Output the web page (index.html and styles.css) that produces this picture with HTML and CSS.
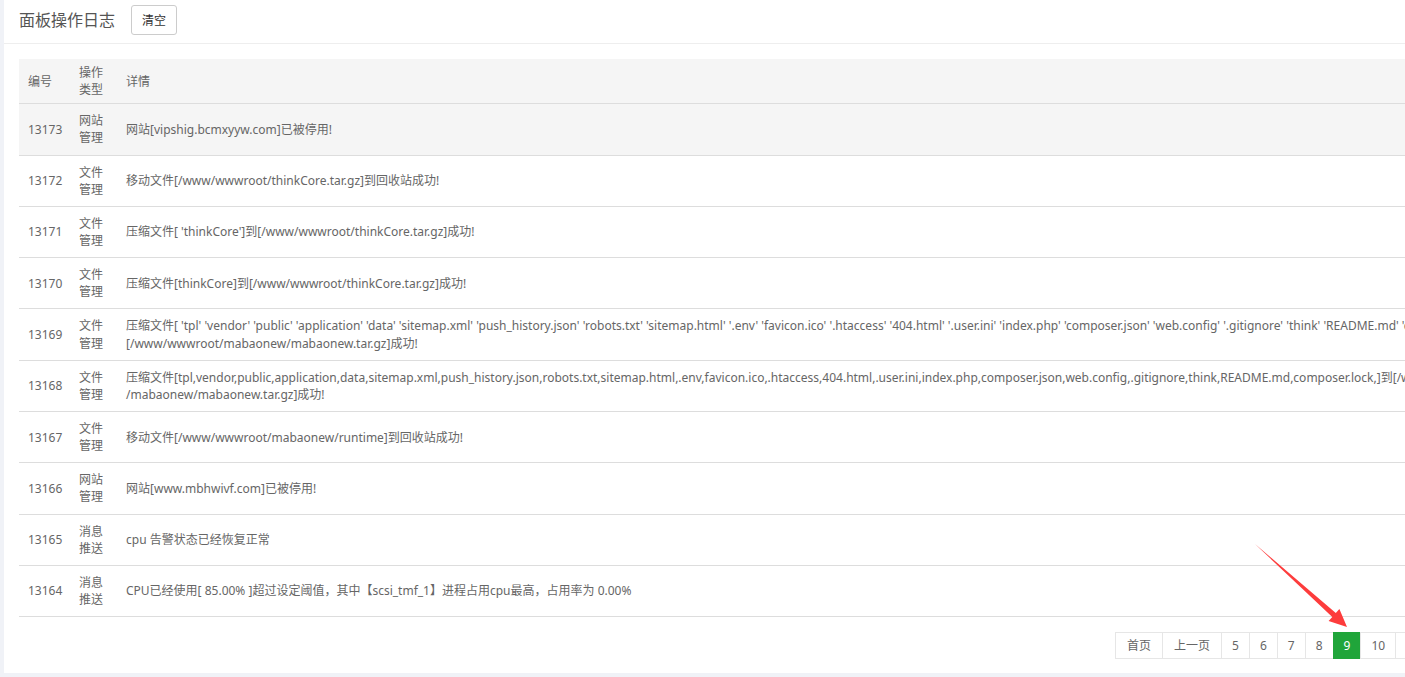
FILE: index.html
```
<!DOCTYPE html>
<html lang="zh-CN">
<head>
  <meta charset="UTF-8">
  <title>面板操作日志</title>
  <link rel="stylesheet" href="styles.css">
</head>
<body>
  <div class="panel">
    <div class="panel-head">
      <span class="panel-title">面板操作日志</span>
      <button class="btn">清空</button>
    </div>

    <div class="panel-body">
      <table class="log-table">
        <thead>
          <tr>
            <th class="col-id">编号</th>
            <th class="col-type">操作类型</th>
            <th>详情</th>
          </tr>
        </thead>
        <tbody>
          <tr class="hover">
            <td>13173</td><td>网站管理</td>
            <td>网站[vipshig.bcmxyyw.com]已被停用!</td>
          </tr>
          <tr>
            <td>13172</td><td>文件管理</td>
            <td>移动文件[/www/wwwroot/thinkCore.tar.gz]到回收站成功!</td>
          </tr>
          <tr>
            <td>13171</td><td>文件管理</td>
            <td>压缩文件[ 'thinkCore']到[/www/wwwroot/thinkCore.tar.gz]成功!</td>
          </tr>
          <tr>
            <td>13170</td><td>文件管理</td>
            <td>压缩文件[thinkCore]到[/www/wwwroot/thinkCore.tar.gz]成功!</td>
          </tr>
          <tr>
            <td>13169</td><td>文件管理</td>
            <td>压缩文件[ 'tpl' 'vendor' 'public' 'application' 'data' 'sitemap.xml' 'push_history.json' 'robots.txt' 'sitemap.html' '.env' 'favicon.ico' '.htaccess' '404.html' '.user.ini' 'index.php' 'composer.json' 'web.config' '.gitignore' 'think' 'README.md' 'composer.lock' ]到 [/www/wwwroot/mabaonew/mabaonew.tar.gz]成功!</td>
          </tr>
          <tr>
            <td>13168</td><td>文件管理</td>
            <td>压缩文件[tpl,vendor,public,application,data,sitemap.xml,push_history.json,robots.txt,sitemap.html,.env,favicon.ico,.htaccess,404.html,.user.ini,index.php,composer.json,web.config,.gitignore,think,README.md,composer.lock,]到[/www/wwwroot /mabaonew/mabaonew.tar.gz]成功!</td>
          </tr>
          <tr>
            <td>13167</td><td>文件管理</td>
            <td>移动文件[/www/wwwroot/mabaonew/runtime]到回收站成功!</td>
          </tr>
          <tr>
            <td>13166</td><td>网站管理</td>
            <td>网站[www.mbhwivf.com]已被停用!</td>
          </tr>
          <tr>
            <td>13165</td><td>消息推送</td>
            <td>cpu 告警状态已经恢复正常</td>
          </tr>
          <tr>
            <td>13164</td><td>消息推送</td>
            <td>CPU已经使用[ 85.00% ]超过设定阈值，其中【scsi_tmf_1】进程占用cpu最高，占用率为 0.00%</td>
          </tr>
        </tbody>
      </table>

      <div class="pager">
        <a>首页</a>
        <a>上一页</a>
        <a class="num">5</a>
        <a class="num">6</a>
        <a class="num">7</a>
        <a class="num">8</a>
        <a class="num current">9</a>
        <a class="num">10</a>
        <a class="num">11</a>
        <a class="num">12</a>
        <a class="num">13</a>
        <a>下一页</a>
        <a>尾页</a>
      </div>
    </div>
  </div>

  <!-- red annotation arrow -->
  <svg class="mark" width="1405" height="677" viewBox="0 0 1405 677">
    <polygon fill="#fd3c3c" points="1255,544 1335.8,613.1 1339.4,609.1 1347,627 1328.6,620.9 1332.3,616.9"/>
  </svg>
</body>
</html>
```

FILE: styles.css
```
html, body {
  margin: 0;
  overflow: hidden;
}

body {
  background: #f0f2f7;
  font-family: "Noto Sans", "Noto Sans CJK SC", sans-serif;
  font-size: 12px;
  color: #666;
  padding-left: 4px;
  width: 1700px;
}

.panel {
  background: #fff;
  height: 673px;
}

.panel-head {
  height: 43px;
  border-bottom: 1px solid #eee;
  padding-left: 15px;
  display: flex;
  align-items: center;
}

.panel-title {
  font-size: 16px;
  color: #555;
  margin-right: 16px;
  margin-top: -5px;
}

.btn {
  font-family: inherit;
  font-size: 12px;
  color: #333;
  background: #fff;
  border: 1px solid #ccc;
  border-radius: 3px;
  height: 30px;
  padding: 0 10px;
  margin-top: -3px;
}

.panel-body {
  padding: 15px;
}

.log-table {
  width: 1600px;
  border-collapse: collapse;
  table-layout: fixed;
}

.log-table th,
.log-table td {
  text-align: left;
  vertical-align: middle;
  line-height: 17.14px;
  padding: 8px;
  border-bottom: 1px solid #ddd;
  font-weight: normal;
}

.log-table th {
  background: #f5f5f5;
  padding-top: 5px;
  padding-bottom: 5px;
}

.log-table th:first-child,
.log-table td:first-child {
  padding-left: 9px;
}

.log-table .col-id {
  width: 35px;
}

.log-table .col-type {
  width: 31px;
}

.log-table tr.hover td {
  background: #f5f5f5;
}

.pager {
  display: flex;
  margin-top: 15px;
  margin-left: 1096px;
}

.pager a {
  display: block;
  height: 25px;
  line-height: 25px;
  padding: 0 11px;
  border: 1px solid #e6e6e6;
  border-right: none;
  color: #666;
  white-space: nowrap;
}

.pager a.num {
  padding: 0 10px;
}

.pager a.current {
  background: #20a53a;
  border-color: #20a53a;
  color: #fff;
}

.mark {
  position: absolute;
  left: 0;
  top: 0;
  pointer-events: none;
}
```
